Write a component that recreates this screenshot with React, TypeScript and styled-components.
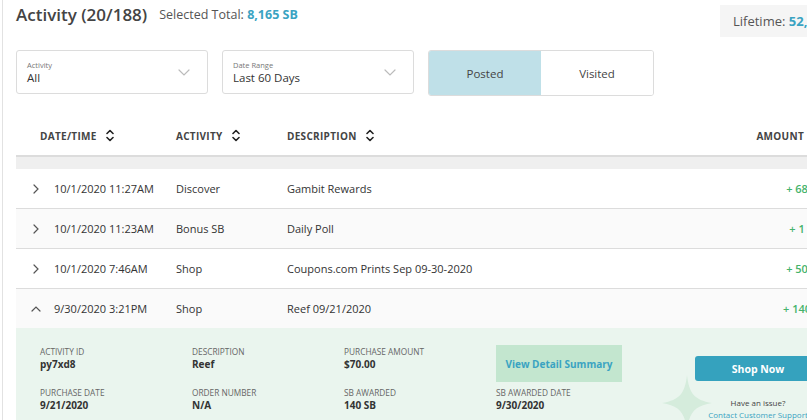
import React from 'react';
import styled, { createGlobalStyle } from 'styled-components';

const GlobalStyle = createGlobalStyle`
  html, body {
    margin: 0;
    padding: 0;
    background: #fff;
    overflow: hidden;
  }
  body {
    font-family: 'Open Sans', 'Liberation Sans', sans-serif;
    color: #333;
  }
`;

const Page = styled.div`
  width: 834px;
  height: 420px;
  margin-left: 2px;
  border-left: 1px solid #e2e2e2;
  padding-left: 13px;
`;

const TopBar = styled.div`
  display: flex;
  align-items: flex-start;
  height: 37px;
  margin-bottom: 13px;
`;

const Title = styled.h1`
  margin: 0;
  padding-top: 3px;
  font-size: 17px;
  line-height: 24px;
  font-weight: 600;
  color: #444;
`;

const Selected = styled.div`
  margin-left: 12px;
  padding-top: 5px;
  font-size: 12.5px;
  line-height: 20px;
  color: #555;

  b {
    color: #3aa3c2;
    font-weight: 700;
  }
`;

const Lifetime = styled.div`
  margin-left: auto;
  margin-top: 5px;
  height: 32px;
  width: 117px;
  padding-left: 13px;
  background: #f5f5f5;
  font-size: 13px;
  line-height: 32px;
  color: #555;
  white-space: nowrap;

  b {
    color: #3aa3c2;
    font-weight: 700;
  }
`;

const Filters = styled.div`
  display: flex;
  align-items: flex-start;
  gap: 14px;
`;

const Select = styled.div`
  position: relative;
  box-sizing: border-box;
  width: 192px;
  height: 44px;
  border: 1px solid #dcdcdc;
  border-radius: 3px;
  padding: 9px 0 0 10px;

  small {
    display: block;
    font-size: 7.5px;
    line-height: 10px;
    color: #777;
  }
  span {
    display: block;
    font-size: 11.5px;
    line-height: 16px;
    color: #333;
  }
  svg {
    position: absolute;
    right: 17px;
    top: 18px;
  }
`;

const Toggle = styled.div`
  display: flex;
  box-sizing: border-box;
  width: 226px;
  height: 46px;
  border: 1px solid #dcdcdc;
  border-radius: 3px;
  overflow: hidden;
`;

const ToggleOption = styled.div<{ $active?: boolean }>`
  flex: 1;
  display: flex;
  align-items: center;
  justify-content: center;
  font-size: 11.5px;
  color: #444;
  background: ${(p) => (p.$active ? '#bfe0e8' : '#fff')};
`;

const HeadRow = styled.div`
  display: grid;
  grid-template-columns: 136px 111px 1fr auto;
  align-items: center;
  height: 39px;
  margin-top: 20px;
  padding: 0 29px 0 24px;
  border-bottom: 2px solid #dcdcdc;
`;

const HeadCell = styled.div`
  display: flex;
  align-items: center;
  gap: 9px;
  font-size: 10px;
  font-weight: 700;
  letter-spacing: 0.3px;
  color: #444;
`;

const Band = styled.div`
  height: 12px;
  background: #efefef;
`;

const Row = styled.div<{ $shade?: boolean }>`
  display: grid;
  grid-template-columns: 38px 122px 111px 1fr 50px;
  align-items: center;
  height: 39px;
  padding-right: 28px;
  font-size: 11px;
  color: #333;
  background: ${(p) => (p.$shade ? '#fafafa' : '#fff')};
  border-bottom: 1px solid #dcdcdc;

  &:last-of-type {
    border-bottom: none;
  }
`;

const Caret = styled.div`
  display: flex;
  justify-content: center;
  padding-left: 2px;
`;

const Amount = styled.div`
  text-align: center;
  color: #45b36b;
  font-weight: 600;
  white-space: nowrap;
`;

const Detail = styled.div`
  position: relative;
  height: 100px;
  background: #eaf5ee;
  overflow: hidden;
`;

const DetailGrid = styled.div`
  position: relative;
  display: grid;
  grid-template-columns: 152px 152px 152px 152px 1fr;
  grid-template-rows: 41px 40px;
  padding: 18px 0 0 24px;
`;

const Field = styled.div`
  small {
    display: block;
    font-size: 8.3px;
    line-height: 12px;
    color: #666;
  }
  span {
    display: block;
    font-size: 10px;
    line-height: 13px;
    font-weight: 700;
    color: #333;
  }
`;

const SummaryButton = styled.div`
  width: 126px;
  height: 37px;
  margin-top: -1px;
  background: #c3e6cf;
  color: #3aa3c2;
  font-size: 10px;
  font-weight: 700;
  display: flex;
  align-items: center;
  justify-content: center;
`;

const Cta = styled.div`
  grid-column: 5;
  grid-row: 1 / span 2;
  display: flex;
  flex-direction: column;
  align-items: center;
  width: 126px;
  margin-left: 47px;
  padding-top: 10px;
`;

const ShopButton = styled.div`
  width: 126px;
  height: 25px;
  border-radius: 3px;
  background: #35a2be;
  color: #fff;
  font-size: 10.5px;
  font-weight: 700;
  display: flex;
  align-items: center;
  justify-content: center;
  margin-bottom: 16px;
`;

const Issue = styled.div`
  font-size: 8px;
  line-height: 12px;
  color: #444;
  text-align: center;
  white-space: nowrap;

  a {
    display: block;
    color: #3aa3c2;
    text-decoration: none;
  }
`;

const Sparkle = styled.svg`
  position: absolute;
  left: 646px;
  top: 47px;
`;

const SortIcon = () => (
  <svg width="8" height="13" viewBox="0 0 8 13" fill="none" stroke="#222" strokeWidth="1.6" strokeLinecap="round" strokeLinejoin="round">
    <path d="M1 4.5 L4 1.5 L7 4.5" />
    <path d="M1 8.5 L4 11.5 L7 8.5" />
  </svg>
);

const DownChevron = () => (
  <svg width="12" height="7" viewBox="0 0 12 7" fill="none" stroke="#bbb" strokeWidth="1.2" strokeLinecap="round">
    <path d="M1 1 L6 6 L11 1" />
  </svg>
);

const RightChevron = () => (
  <svg width="6" height="10" viewBox="0 0 6 10" fill="none" stroke="#555" strokeWidth="1.2" strokeLinecap="round">
    <path d="M1 1 L5 5 L1 9" />
  </svg>
);

const UpChevron = () => (
  <svg width="10" height="6" viewBox="0 0 10 6" fill="none" stroke="#555" strokeWidth="1.2" strokeLinecap="round">
    <path d="M1 5 L5 1 L9 5" />
  </svg>
);

const ROWS = [
  { date: '10/1/2020 11:27AM', activity: 'Discover', description: 'Gambit Rewards', amount: '+ 68' },
  { date: '10/1/2020 11:23AM', activity: 'Bonus SB', description: 'Daily Poll', amount: '+ 1' },
  { date: '10/1/2020 7:46AM', activity: 'Shop', description: 'Coupons.com Prints Sep 09-30-2020', amount: '+ 50' },
  { date: '9/30/2020 3:21PM', activity: 'Shop', description: 'Reef 09/21/2020', amount: '+ 140', open: true },
];

const App: React.FC = () => {
  return (
    <>
      <GlobalStyle />
      <Page>
        <TopBar>
          <Title>Activity (20/188)</Title>
          <Selected>
            Selected Total: <b>8,165 SB</b>
          </Selected>
          <Lifetime>
            Lifetime: <b>52,467 SB</b>
          </Lifetime>
        </TopBar>

        <Filters>
          <Select>
            <small>Activity</small>
            <span>All</span>
            <DownChevron />
          </Select>
          <Select>
            <small>Date Range</small>
            <span>Last 60 Days</span>
            <DownChevron />
          </Select>
          <Toggle>
            <ToggleOption $active>Posted</ToggleOption>
            <ToggleOption>Visited</ToggleOption>
          </Toggle>
        </Filters>

        <HeadRow>
          <HeadCell>
            DATE/TIME <SortIcon />
          </HeadCell>
          <HeadCell>
            ACTIVITY <SortIcon />
          </HeadCell>
          <HeadCell>
            DESCRIPTION <SortIcon />
          </HeadCell>
          <HeadCell>
            AMOUNT <SortIcon />
          </HeadCell>
        </HeadRow>
        <Band />

        <div>
          {ROWS.map((r, i) => (
            <Row key={r.date} $shade={i % 2 === 1}>
              <Caret>{r.open ? <UpChevron /> : <RightChevron />}</Caret>
              <div>{r.date}</div>
              <div>{r.activity}</div>
              <div>{r.description}</div>
              <Amount>{r.amount}</Amount>
            </Row>
          ))}
        </div>

        <Detail>
          <Sparkle width="50" height="56" viewBox="0 0 50 56">
            <path d="M25 0 C27 18 32 25 50 28 C32 31 27 38 25 56 C23 38 18 31 0 28 C18 25 23 18 25 0 Z" fill="#d5ecdc" />
          </Sparkle>
          <DetailGrid>
            <Field>
              <small>ACTIVITY ID</small>
              <span>py7xd8</span>
            </Field>
            <Field>
              <small>DESCRIPTION</small>
              <span>Reef</span>
            </Field>
            <Field>
              <small>PURCHASE AMOUNT</small>
              <span>$70.00</span>
            </Field>
            <SummaryButton>View Detail Summary</SummaryButton>
            <Cta>
              <ShopButton>Shop Now</ShopButton>
              <Issue>
                Have an issue?
                <a href="#">Contact Customer Support</a>
              </Issue>
            </Cta>
            <Field>
              <small>PURCHASE DATE</small>
              <span>9/21/2020</span>
            </Field>
            <Field>
              <small>ORDER NUMBER</small>
              <span>N/A</span>
            </Field>
            <Field>
              <small>SB AWARDED</small>
              <span>140 SB</span>
            </Field>
            <Field>
              <small>SB AWARDED DATE</small>
              <span>9/30/2020</span>
            </Field>
          </DetailGrid>
        </Detail>
      </Page>
    </>
  );
};

export default App;
